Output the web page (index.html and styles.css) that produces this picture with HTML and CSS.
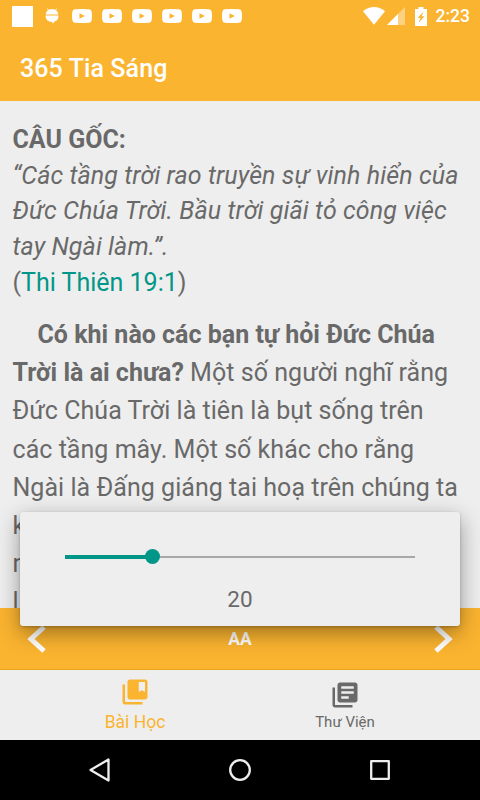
FILE: index.html
```html
<!DOCTYPE html>
<html lang="vi">
<head>
	<meta charset="UTF-8">
	<title>365 Tia Sáng</title>
	<link rel="stylesheet" href="styles.css">
</head>
<body>
	<svg class="defs">
		<symbol id="yt" viewBox="0 0 20 14">
			<path fill="#fff" d="M3 .3Q10-.3 17 .3Q19.500.5 19.700 3Q20.200 7 19.700 11Q19.500 13.500 17 13.700Q10 14.300 3 13.700Q.5 13.500.3 11Q-.2 7 .3 3Q.5.5 3 .3z"/>
			<path fill="#fbb430" d="M7.500 4.200L12.800 7L7.500 9.800z"/>
		</symbol>
	</svg>
	<div class="statusbar">
		<span class="square"></span>
		<svg class="droid" width="14" height="16" viewBox="0 0 14 16">
			<path fill="#fff" d="M.7 6.500A6.300 5.500 0 0 1 13.300 6.500zM.5 7.500H13.500Q13.500 12.500 9.500 13.600L8 15.500L7 14Q.5 14 .5 7.500z"/>
			<path stroke="#fff" stroke-width=".8" d="M2.500.5L4 3M11.500.5L10 3"/>
		</svg>
		<svg class="yt"><use href="#yt"/></svg>
		<svg class="yt"><use href="#yt"/></svg>
		<svg class="yt"><use href="#yt"/></svg>
		<svg class="yt"><use href="#yt"/></svg>
		<svg class="yt"><use href="#yt"/></svg>
		<svg class="yt"><use href="#yt"/></svg>
		<svg class="wifi" width="22" height="18" viewBox="0 0 22 18"><path fill="#fff" d="M0 4.200Q11-4 22 4.200L11 17.800z"/></svg>
		<svg class="signal" width="18" height="18" viewBox="0 0 18 18"><path fill="#fff" opacity=".4" d="M18 0V18H0z"/><path fill="#fff" d="M11 7V18H0z"/></svg>
		<svg class="battery" width="12" height="19" viewBox="0 0 12 19"><path fill="#fff" d="M3.500 0H8.500V2H12V19H0V2H3.500z"/><path fill="#fbb430" d="M8.500 4.500L2.700 11H5.500L3.500 16L9.500 9.300H6.600z"/></svg>
		<span class="time">2:23</span>
	</div>
	<div class="header">365 Tia Sáng</div>
	<div class="content">
		<div class="verse">
			<b>CÂU GỐC:</b><br>
			<i>“Các tầng trời rao truyền sự vinh hiển của<br>Đức Chúa Trời. Bầu trời giãi tỏ công việc<br>tay Ngài làm.”.</i><br>
			(<a class="link">Thi Thiên 19:1</a>)
		</div>
		<p class="lesson"><b>Có khi nào các bạn tự hỏi Đức Chúa<br>Trời là ai chưa?</b> Một số người nghĩ rằng<br>Đức Chúa Trời là tiên là bụt sống trên<br>các tầng mây. Một số khác cho rằng<br>Ngài là Đấng giáng tai hoạ trên chúng ta<br>k<br>n<br>l</p>
	</div>
	<div class="toolbar">
		<svg width="20" height="28" viewBox="0 0 20 28"><path d="M17 2L4 14L17 26"/></svg>
		<span>AA</span>
		<svg width="20" height="28" viewBox="0 0 20 28"><path d="M3 2L16 14L3 26"/></svg>
		<!-- font size popup -->
		<div class="popup">
			<div class="slider">
				<div class="slider-on"></div>
				<div class="slider-dot"></div>
			</div>
			<div class="size">20</div>
		</div>
	</div>
	<div class="tabs">
		<div class="tab on">
			<svg width="30" height="30" viewBox="0 0 24 24"><path d="M4 6H2v14c0 1.100.9 2 2 2h14v-2H4V6z"/><path fill-rule="evenodd" d="M20 2H8c-1.100 0-2 .9-2 2v12c0 1.100.9 2 2 2h12c1.100 0 2-.9 2-2V4c0-1.100-.9-2-2-2zM20 12l-2.500-1.500L15 12V4h5z"/></svg>
			<span>Bài Học</span>
		</div>
		<div class="tab">
			<svg width="30" height="30" viewBox="0 0 24 24"><path d="M4 6H2v14c0 1.100.9 2 2 2h14v-2H4V6zm16-4H8c-1.100 0-2 .9-2 2v12c0 1.100.9 2 2 2h12c1.100 0 2-.9 2-2V4c0-1.100-.9-2-2-2zm-1 9H9V9h10v2zm-4 4H9v-2h6v2zm4-8H9V5h10v2z"/></svg>
			<span>Thư Viện</span>
		</div>
	</div>
	<div class="navbar">
		<svg width="24" height="26" viewBox="0 0 24 26"><path d="M20.500 2.500V23.500L2.500 13z"/></svg>
		<svg width="24" height="26" viewBox="0 0 24 26"><circle cx="12" cy="13" r="9.800"/></svg>
		<svg width="24" height="26" viewBox="0 0 24 26"><path d="M3.200 4.200H20.800V21.800H3.200z"/></svg>
	</div>
</body>
</html>
```
FILE: styles.css
```css
*{
	margin: 0;
	padding: 0;
	box-sizing: border-box;
}
body{
	width: 480px;
	height: 800px;
	overflow: hidden;
	display: flex;
	flex-direction: column;
	background-color: #eee;
	color: #696969;
	font-family: Roboto, "Noto Sans", sans-serif;
}
svg{
	flex: none;
}
.defs{
	display: none;
}
.statusbar{
	height: 32px;
	flex: none;
	display: flex;
	align-items: center;
	padding-left: 12px;
	background-color: #fbb430;
	color: #FFF;
}
.square{
	width: 21px;
	height: 21px;
	margin-right: 12px;
	background-color: #FFF;
}
.droid{
	margin-right: 13px;
}
.yt{
	width: 20px;
	height: 14px;
	margin-right: 10px;
}
.wifi{
	margin-left: 110.5px;
	margin-right: 2px;
}
.signal{
	margin-right: 10px;
}
.battery{
	margin-right: 9px;
}
.time{
	font-size: 17.5px;
	font-weight: 500;
}
.header{
	height: 69px;
	flex: none;
	padding-left: 20px;
	line-height: 73px;
	background-color: #fbb430;
	color: #FFF;
	font-size: 25px;
	font-weight: 500;
	letter-spacing: 0.1px;
}
.content{
	height: 507px;
	flex: none;
	overflow: hidden;
	padding: 21px 0 0 12.5px;
	font-size: 25px;
	white-space: nowrap;
}
.verse{
	line-height: 35.7px;
}
.verse i{
	letter-spacing: 0.1px;
}
.link{
	color: #009688;
}
.lesson{
	margin-top: 15.4px;
	text-indent: 25px;
	line-height: 38.2px;
	letter-spacing: 0.04px;
}
.lesson b{
	letter-spacing: 0;
}
.toolbar{
	position: relative;
	height: 62px;
	flex: none;
	display: flex;
	align-items: center;
	justify-content: space-between;
	padding: 0 27px;
	background-color: #fbb430;
	border-bottom: 1px solid #eca51d;
	color: #FFF;
	font-size: 17.5px;
	font-weight: 700;
}
.toolbar svg path{
	fill: none;
	stroke: #FFF;
	stroke-width: 5;
}
.popup{
	position: absolute;
	left: 20px;
	bottom: 43px;
	width: 440px;
	height: 114px;
	padding: 44px 45px 0;
	border-radius: 3px;
	background-color: #eee;
	box-shadow: 0 7px 22px rgba(0,0,0,0.38), 0 1px 3px rgba(0,0,0,0.2);
	color: #696969;
}
.slider{
	position: relative;
	height: 2px;
	background-color: #a8a8a8;
}
.slider-on{
	position: absolute;
	left: 0;
	top: -1px;
	width: 88px;
	height: 4px;
	background-color: #009688;
}
.slider-dot{
	position: absolute;
	left: 80px;
	top: -7px;
	width: 15px;
	height: 15px;
	border-radius: 50%;
	background-color: #009688;
}
.size{
	margin-top: 26px;
	line-height: 30px;
	text-align: center;
	font-size: 22.500px;
	font-weight: 400;
}
.tabs{
	height: 70px;
	flex: none;
	display: flex;
	justify-content: center;
}
.tab{
	width: 210px;
	padding-top: 10px;
	display: flex;
	flex-direction: column;
	align-items: center;
	font-size: 15px;
}
.tab svg{
	fill: #696969;
}
.tab span{
	margin-top: 3px;
	line-height: 18px;
}
.tab.on{
	padding-top: 7px;
	color: #fbb430;
	font-size: 17.500px;
}
.tab.on span{
	margin-top: 6px;
}
.tab.on svg{
	fill: #fbb430;
}
.navbar{
	height: 60px;
	flex: none;
	display: flex;
	align-items: center;
	justify-content: space-between;
	padding: 0 88px;
	background-color: #000;
}
.navbar svg{
	fill: none;
	stroke: #eee;
	stroke-width: 2.300;
	stroke-linejoin: round;
}
```
